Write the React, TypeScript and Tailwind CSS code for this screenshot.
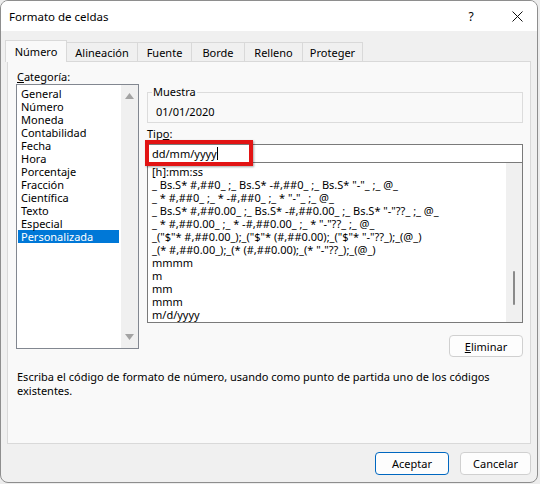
const categorias = [
  "General",
  "Número",
  "Moneda",
  "Contabilidad",
  "Fecha",
  "Hora",
  "Porcentaje",
  "Fracción",
  "Científica",
  "Texto",
  "Especial",
  "Personalizada",
];

const tipos = [
  "[h]:mm:ss",
  '_ Bs.S* #,##0_ ;_ Bs.S* -#,##0_ ;_ Bs.S* "-"_ ;_ @_',
  '_ * #,##0_ ;_ * -#,##0_ ;_ * "-"_ ;_ @_',
  '_ Bs.S* #,##0.00_ ;_ Bs.S* -#,##0.00_ ;_ Bs.S* "-"??_ ;_ @_',
  '_ * #,##0.00_ ;_ * -#,##0.00_ ;_ * "-"??_ ;_ @_',
  '_("$"* #,##0.00_);_("$"* (#,##0.00);_("$"* "-"??_);_(@_)',
  '_(* #,##0.00_);_(* (#,##0.00);_(* "-"??_);_(@_)',
  "mmmm",
  "m",
  "mm",
  "mmm",
  "m/d/yyyy",
];

const tabs = [
  { label: "Número", w: "w-[62px]" },
  { label: "Alineación", w: "w-[71px]" },
  { label: "Fuente", w: "w-[54px]" },
  { label: "Borde", w: "w-[53px]" },
  { label: "Relleno", w: "w-[58px]" },
  { label: "Proteger", w: "w-[60px]" },
];

function Arrow({ down }: { down?: boolean }) {
  return (
    <svg width="9" height="6" viewBox="0 0 9 6">
      <path d={down ? "M0 0 H9 L4.5 6 Z" : "M0 6 H9 L4.5 0 Z"} fill="#a3a3a3" />
    </svg>
  );
}

export default function App() {
  return (
    <div className="w-[540px] h-[484px] bg-[#ededed] font-['Noto_Sans',sans-serif] text-[11px] leading-[13px] text-black">
      <div className="w-[538px] h-[483px] rounded-lg border border-[#8e8e8e] bg-[#f0f0f0] overflow-hidden flex flex-col">
        {/* barra de título */}
        <div className="h-[30px] bg-white flex items-center pl-[8px]">
          <span className="flex-1 text-[11.5px]">Formato de celdas</span>
          <span className="w-[20px] text-center text-[12px] mr-[31px]">?</span>
          <svg width="11" height="11" viewBox="0 0 11 11" className="mr-[14px]">
            <path d="M0.5 0.5 L10.5 10.5 M10.5 0.5 L0.5 10.5" stroke="#111" strokeWidth="1" />
          </svg>
        </div>

        {/* pestañas */}
        <div className="h-[30px] flex items-end pl-[4px]">
          {tabs.map((t, i) =>
            i === 0 ? (
              <div
                key={t.label}
                className={`${t.w} h-[22px] -mb-px z-10 flex items-center justify-center border border-b-0 border-[#d9d9d9] bg-[#f9f9f9]`}
              >
                {t.label}
              </div>
            ) : (
              <div
                key={t.label}
                className={`${t.w} h-[19px] flex items-center justify-center border border-l-0 border-b-0 border-[#d9d9d9] bg-[#f0f0f0]`}
              >
                {t.label}
              </div>
            )
          )}
        </div>

        {/* panel */}
        <div className="ml-[6px] w-[524px] h-[383px] border border-[#d9d9d9] bg-[#f9f9f9] flex flex-col">
          <div className="flex items-start gap-[8px] pl-[8px] pt-[8px]">
            {/* categoría */}
            <div className="flex flex-col">
              <div className="pl-[1px] h-[14px]">
                <span className="underline">C</span>ategoría:
              </div>
              <div className="w-[123px] h-[265px] border border-[#828790] bg-white flex">
                <div className="flex-1 pt-[2px] pl-[1px]">
                  {categorias.map((c) =>
                    c === "Personalizada" ? (
                      <div key={c} className="h-[13px] w-[101px] bg-[#0078d7] text-white pl-[3px]">
                        {c}
                      </div>
                    ) : (
                      <div key={c} className="h-[13px] pl-[3px]">
                        {c}
                      </div>
                    )
                  )}
                </div>
                <div className="w-[17px] bg-[#f0f0f0] flex flex-col items-center justify-between py-[8px]">
                  <Arrow />
                  <Arrow down />
                </div>
              </div>
            </div>

            {/* muestra + tipo */}
            <div className="flex flex-col w-[376px] pt-[22px]">
              <div className="relative h-[31px] border border-[#dcdcdc] pl-[8px] pt-[12px]">
                <span className="absolute -top-[8px] left-[4px] bg-[#f9f9f9] px-[1px]">Muestra</span>
                01/01/2020
              </div>
              <div className="mt-[4px] h-[17px]">
                Tip<span className="underline">o</span>:
              </div>
              <div className="relative h-[19px] border border-[#7a7a7a] bg-white pl-[4px] flex items-center">
                dd/mm/yyyy
                <span className="inline-block w-px h-[13px] bg-black" />
                <div className="absolute -left-[3px] -top-[5px] w-[108px] h-[26px] border-[4px] border-[#e21414] shadow-[1px_1px_2px_rgba(0,0,0,0.35)]" />
              </div>
              <div className="h-[160px] border border-t-0 border-[#7a7a7a] bg-white flex">
                <div className="flex-1 pt-[2px] pl-[4px] whitespace-pre">
                  {tipos.map((t) => (
                    <div key={t} className="h-[13px]">
                      {t}
                    </div>
                  ))}
                </div>
                <div className="w-[16px] bg-[#f0f0f0] flex justify-center pt-[108px]">
                  <div className="w-[2px] h-[34px] rounded-full bg-[#8a8a8a]" />
                </div>
              </div>
              <div className="mt-[12px] flex justify-end">
                <button className="w-[74px] h-[22px] rounded-[4px] border border-[#d0d0d0] bg-[#fdfdfd]">
                  <span className="underline">E</span>liminar
                </button>
              </div>
            </div>
          </div>
          <p className="pl-[9px] mt-[13px] leading-[14px] w-[510px]">
            Escriba el código de formato de número, usando como punto de partida uno de los códigos existentes.
          </p>
        </div>

        {/* botones */}
        <div className="flex justify-end gap-[11px] pr-[6px] pt-[8px]">
          <button className="w-[74px] h-[23px] rounded-[4px] border border-[#0067c0] bg-[#fdfdfd]">Aceptar</button>
          <button className="w-[71px] h-[23px] rounded-[4px] border border-[#d0d0d0] bg-[#fdfdfd]">Cancelar</button>
        </div>
      </div>
    </div>
  );
}
